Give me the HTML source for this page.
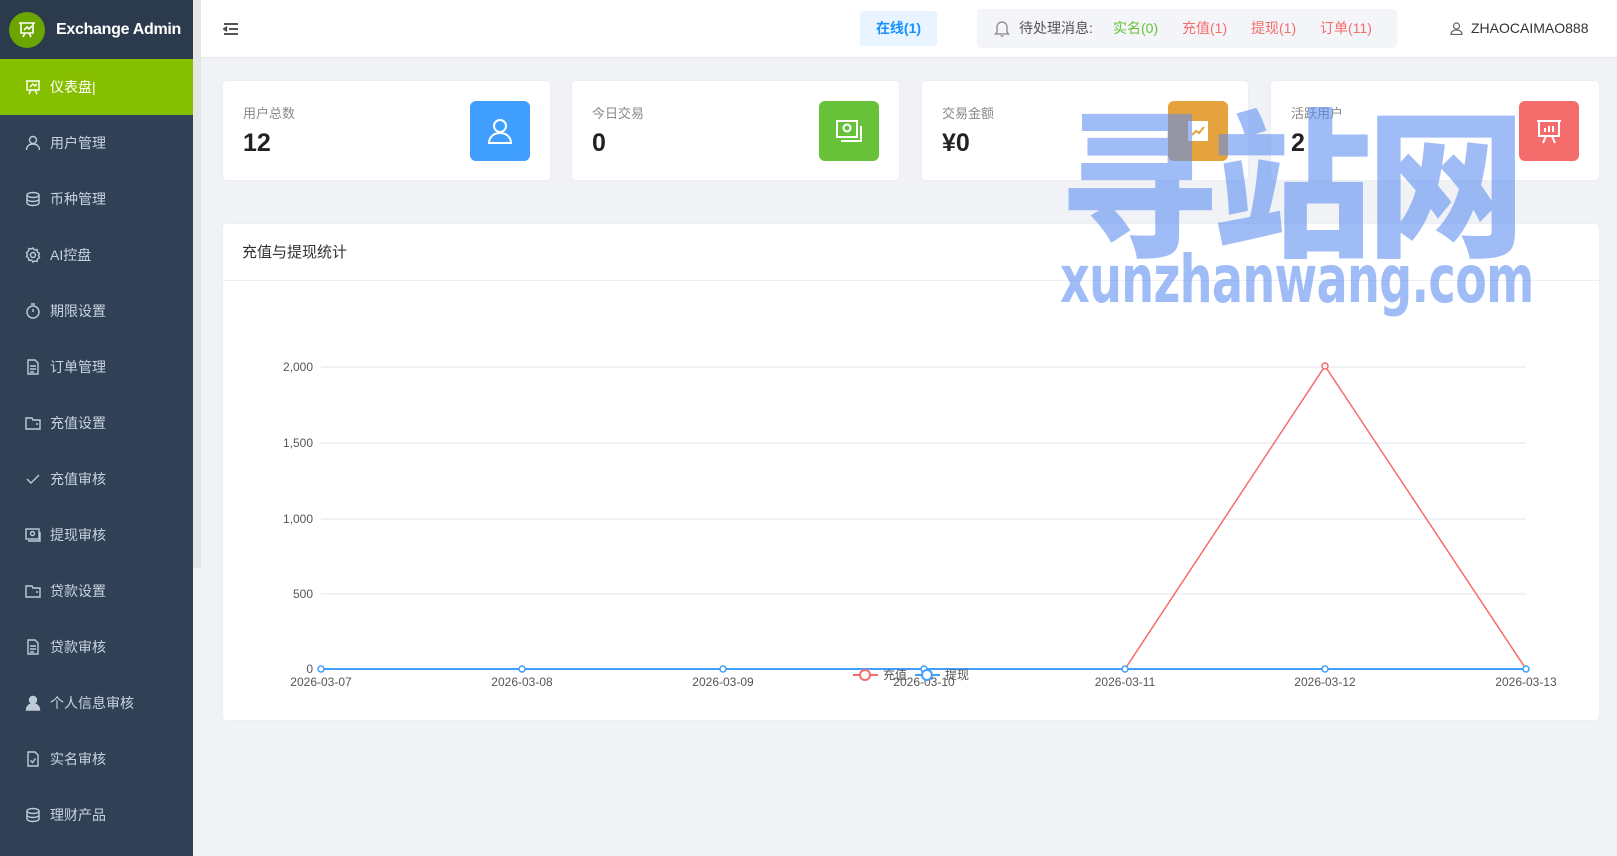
<!DOCTYPE html>
<html><head><meta charset="utf-8"><style>
*{margin:0;padding:0;box-sizing:border-box}
body{width:1617px;height:856px;overflow:hidden;background:#f0f2f5;font-family:"Liberation Sans","Noto Sans CJK SC",sans-serif;position:relative}
.side{position:absolute;left:0;top:0;width:193px;height:856px;background:#304156}
.logo{height:59px;background:#2b3a4d;display:flex;align-items:center;padding-left:9px;white-space:nowrap}
.logo .c{width:36px;height:36px;border-radius:50%;background:#6aa500;display:flex;align-items:center;justify-content:center;flex:none}
.logo span{color:#fff;font-weight:bold;font-size:16px;margin-left:11px;letter-spacing:-0.3px}
.item{height:56px;display:flex;align-items:center;padding-left:25px;color:#c8d2de;font-size:14px}
.item svg{width:16px;height:16px;margin-right:9px;stroke:#bfcbd9;fill:none;stroke-width:1.4}
.item.act{background:#86bf00;color:#fff}
.item.act svg{stroke:#fff}
.scroll{position:absolute;left:193px;top:0;width:8px;height:568px;background:#e6e6e6}
.head{position:absolute;left:201px;top:0;right:0;height:58px;background:#fff;border-bottom:1px solid #e6e6e6}
.card{position:absolute;top:80px;height:101px;background:#fff;border:1px solid #ebeef5;border-radius:5px}
.card .t{position:absolute;left:20px;top:22px;font-size:13px;color:#888}
.card .v{position:absolute;left:20px;top:48px;font-size:25px;font-weight:bold;color:#222}
.card .ic{position:absolute;right:20px;top:20px;width:60px;height:60px;border-radius:6px;display:flex;align-items:center;justify-content:center}
.panel{position:absolute;left:222px;top:223px;width:1378px;height:498px;background:#fff;border-radius:5px;border:1px solid #ebeef5}
.wm{position:absolute;color:rgba(90,140,240,0.58);font-weight:900;font-family:"Noto Sans CJK SC",sans-serif;white-space:nowrap}
</style></head><body>
<div class="side">
<div class="logo"><div class="c"><svg width="20" height="20" viewBox="0 0 20 20" fill="none" stroke="#fff" stroke-width="1.6"><path d="M2 3h16M4 3v10h12V3M7 10l3-3 2 2 3-3M8 13l-2 4M12 13l2 4"/></svg></div><span>Exchange Admin</span></div>
<div class="item act"><svg viewBox="0 0 16 16"><path d="M1 2h14M2 2v9h12V2M5 8l3-3 2 2 2-2M6 11l-2 4M10 11l2 4"/></svg>仪表盘|</div>
<div class="item"><svg viewBox="0 0 16 16"><circle cx="8" cy="5" r="3.5"/><path d="M1.5 15c0-4 3-6 6.5-6s6.5 2 6.5 6"/></svg>用户管理</div>
<div class="item"><svg viewBox="0 0 16 16"><ellipse cx="8" cy="4" rx="6" ry="2.5"/><path d="M2 4v8c0 1.4 2.7 2.5 6 2.5s6-1.1 6-2.5V4M2 8c0 1.4 2.7 2.5 6 2.5s6-1.1 6-2.5"/></svg>币种管理</div>
<div class="item"><svg viewBox="0 0 16 16"><circle cx="8" cy="8" r="2.5"/><path d="M8 1l1.5 2 2.5-.5.5 2.5 2 1.5-1 2 1 2-2 1.5-.5 2.5-2.5-.5L8 15l-1.5-2-2.5.5-.5-2.5-2-1.5 1-2-1-2 2-1.5.5-2.5 2.5.5z"/></svg>AI控盘</div>
<div class="item"><svg viewBox="0 0 16 16"><circle cx="8" cy="9" r="6"/><path d="M8 9V6M6 1h4"/></svg>期限设置</div>
<div class="item"><svg viewBox="0 0 16 16"><path d="M3 1h7l3 3v11H3zM5 7h6M5 10h6M5 13h4"/></svg>订单管理</div>
<div class="item"><svg viewBox="0 0 16 16"><path d="M1 3h6l1 2h7v9H1zM11 9h2"/></svg>充值设置</div>
<div class="item"><svg viewBox="0 0 16 16"><path d="M2 8l4 4 8-8"/></svg>充值审核</div>
<div class="item"><svg viewBox="0 0 16 16"><rect x="1" y="2" width="13" height="10"/><circle cx="7.5" cy="6.5" r="2"/><path d="M3 14h12V5"/></svg>提现审核</div>
<div class="item"><svg viewBox="0 0 16 16"><path d="M1 3h6l1 2h7v9H1zM11 9h2"/></svg>贷款设置</div>
<div class="item"><svg viewBox="0 0 16 16"><path d="M3 1h7l3 3v11H3zM5 7h6M5 10h6M5 13h4"/></svg>贷款审核</div>
<div class="item"><svg viewBox="0 0 16 16" style="fill:#bfcbd9"><circle cx="8" cy="5" r="3.5"/><path d="M1.5 15c0-4 3-6 6.5-6s6.5 2 6.5 6z"/></svg>个人信息审核</div>
<div class="item"><svg viewBox="0 0 16 16"><path d="M3 1h7l3 3v11H3zM5.5 9.5l2 2 3-4"/></svg>实名审核</div>
<div class="item"><svg viewBox="0 0 16 16"><ellipse cx="8" cy="4" rx="6" ry="2.5"/><path d="M2 4v8c0 1.4 2.7 2.5 6 2.5s6-1.1 6-2.5V4M2 8c0 1.4 2.7 2.5 6 2.5s6-1.1 6-2.5"/></svg>理财产品</div>
</div>
<div class="scroll"></div>
<div class="head">
<svg style="position:absolute;left:22px;top:22px" width="16" height="14" viewBox="0 0 16 14" stroke="#555" stroke-width="2"><path d="M1 2h14M6 7h9M1 12h14M4 5L1 7l3 2"/></svg>
<div style="position:absolute;left:659px;top:11px;width:77px;height:35px;background:#e8f4ff;border-radius:3px;color:#1890ff;font-size:14px;font-weight:bold;line-height:35px;text-align:center">在线(1)</div>
<div style="position:absolute;left:776px;top:9px;width:420px;height:39px;background:#f4f5f8;border-radius:4px;font-size:14px;line-height:39px;color:#555">
<svg style="position:absolute;left:17px;top:11px" width="16" height="17" viewBox="0 0 16 17" fill="none" stroke="#888" stroke-width="1.3"><path d="M3 12V7a5 5 0 0110 0v5l1.5 2h-13zM6.5 16h3"/></svg>
<span style="position:absolute;left:42px">待处理消息:</span>
<span style="position:absolute;left:136px;color:#67c23a">实名(0)</span>
<span style="position:absolute;left:205px;color:#f56c6c">充值(1)</span>
<span style="position:absolute;left:274px;color:#f56c6c">提现(1)</span>
<span style="position:absolute;left:343px;color:#f56c6c">订单(11)</span></div>
<svg style="position:absolute;left:1249px;top:22px" width="13" height="13" viewBox="0 0 13 13" fill="none" stroke="#666" stroke-width="1.2"><circle cx="6.5" cy="4" r="3"/><path d="M1 12.5c0-3 2.5-4.5 5.5-4.5s5.5 1.5 5.5 4.5z"/></svg>
<span style="position:absolute;left:1270px;top:20px;font-size:14px;color:#333">ZHAOCAIMAO888</span>
</div>
<div class="card" style="left:222px;width:329px"><div class="t">用户总数</div><div class="v">12</div><div class="ic" style="background:#409eff"><svg width="26" height="28" viewBox="0 0 26 28" fill="none" stroke="#fff" stroke-width="2"><circle cx="13" cy="9" r="6"/><path d="M2 26c0-6 5-10 11-10s11 4 11 10z"/></svg></div></div>
<div class="card" style="left:571px;width:329px"><div class="t">今日交易</div><div class="v">0</div><div class="ic" style="background:#67c23a"><svg width="28" height="26" viewBox="0 0 28 26" fill="none" stroke="#fff" stroke-width="2"><rect x="2" y="3" width="20" height="16"/><circle cx="12" cy="10" r="3.5"/><path d="M6 23h20V8"/></svg></div></div>
<div class="card" style="left:921px;width:328px"><div class="t">交易金额</div><div class="v">¥0</div><div class="ic" style="background:#e6a23c"><svg width="22" height="22" viewBox="0 0 22 22"><rect x="1" y="1" width="20" height="20" fill="#fff"/><path d="M5 15l4-4 3 2 5-6" stroke="#e6a23c" stroke-width="2" fill="none"/></svg></div></div>
<div class="card" style="left:1270px;width:330px"><div class="t">活跃用户</div><div class="v">2</div><div class="ic" style="background:#f56c6c"><svg width="28" height="28" viewBox="0 0 28 28" fill="none" stroke="#fff" stroke-width="2"><path d="M2 4h24M4 4v15h20V4M10 15v-4M14 15V9M18 15v-6M11 19l-3 7M17 19l3 7"/></svg></div></div>
<div class="panel">
<div style="height:57px;border-bottom:1px solid #ebeef5;padding-left:19px;line-height:57px;font-size:15px;color:#303133">充值与提现统计</div>
<svg style="position:absolute;left:0;top:0" width="1378" height="498" font-family="Liberation Sans,Noto Sans CJK SC,sans-serif" font-size="12" fill="#555">
<g stroke="#e0e6f1" stroke-width="1"><path d="M98 143H1303M98 219H1303M98 295H1303M98 370H1303"/></g>
<g text-anchor="end"><text x="90" y="147">2,000</text><text x="90" y="223">1,500</text><text x="90" y="299">1,000</text><text x="90" y="374">500</text><text x="90" y="449">0</text></g>
<g text-anchor="middle"><text x="98" y="462">2026-03-07</text><text x="299" y="462">2026-03-08</text><text x="500" y="462">2026-03-09</text><text x="701" y="462">2026-03-10</text><text x="902" y="462">2026-03-11</text><text x="1102" y="462">2026-03-12</text><text x="1303" y="462">2026-03-13</text></g>
<path d="M902 445L1102 142L1303 445" stroke="#f56c6c" stroke-width="1.5" fill="none"/>
<circle cx="1102" cy="142" r="3" fill="#fff" stroke="#f56c6c" stroke-width="1.5"/>
<path d="M98 445H1303" stroke="#409eff" stroke-width="2"/>
<g fill="#fff" stroke="#409eff" stroke-width="1.5"><circle cx="98" cy="445" r="3"/><circle cx="299" cy="445" r="3"/><circle cx="500" cy="445" r="3"/><circle cx="701" cy="445" r="3"/><circle cx="902" cy="445" r="3"/><circle cx="1102" cy="445" r="3"/><circle cx="1303" cy="445" r="3"/></g>
<path d="M630 451h25" stroke="#f56c6c" stroke-width="2"/><circle cx="642" cy="451" r="5" fill="#fff" stroke="#f56c6c" stroke-width="2"/><text x="660" y="455">充值</text>
<path d="M692 451h25" stroke="#409eff" stroke-width="2"/><circle cx="704" cy="451" r="5" fill="#fff" stroke="#409eff" stroke-width="2"/><text x="722" y="455">提现</text>
</svg></div>
<div class="wm" style="left:1058px;top:80px;font-size:160px;letter-spacing:-6px;line-height:190px">寻站网</div>
<div class="wm" style="left:1060px;top:242px;font-size:66px;font-family:'DejaVu Sans','Liberation Sans',sans-serif;font-weight:bold;line-height:76px;letter-spacing:-1px;transform:scaleX(0.70);transform-origin:left top">xunzhanwang.com</div>
</body></html>
